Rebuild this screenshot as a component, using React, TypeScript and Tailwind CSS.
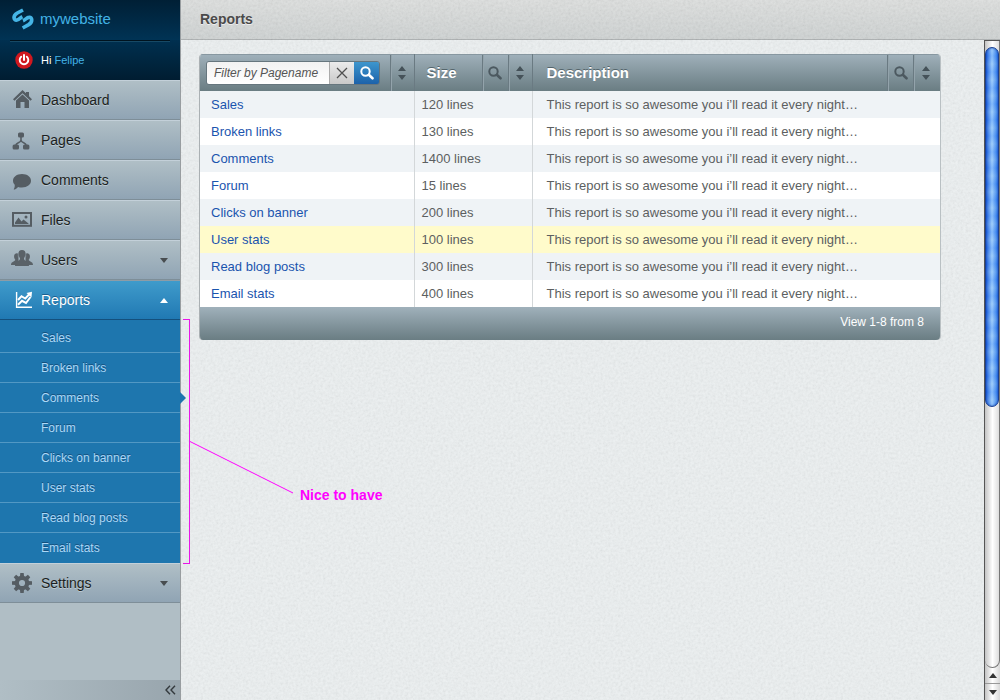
import { useState } from "react";
import type { ReactNode } from "react";

type Report = { name: string; size: string };

const REPORTS: Report[] = [
  { name: "Sales", size: "120 lines" },
  { name: "Broken links", size: "130 lines" },
  { name: "Comments", size: "1400 lines" },
  { name: "Forum", size: "15 lines" },
  { name: "Clicks on banner", size: "200 lines" },
  { name: "User stats", size: "100 lines" },
  { name: "Read blog posts", size: "300 lines" },
  { name: "Email stats", size: "400 lines" },
];

const DESCRIPTION = "This report is so awesome you i’ll read it every night…";

function LogoIcon() {
  return (
    <svg className="h-[22px] w-[22px]" viewBox="0 0 66 66" fill="none" stroke="#45b5e6" strokeWidth="11" aria-hidden="true">
      <path d="M33 6 L16 15 C2 23 4 38 15 36 C22 35 25 29 31 26" />
      <path d="M32 60 L50 50 C63 42 61 26 51 28 C44 29 41 35 33 38" />
    </svg>
  );
}

function PowerIcon() {
  return (
    <svg className="h-[18px] w-[18px]" viewBox="0 0 18 18" aria-hidden="true">
      <circle cx="9" cy="9" r="8.7" fill="#d0181f" />
      <path d="M6.2 5.7 A4.3 4.3 0 1 0 11.8 5.7" fill="none" stroke="#fff" strokeWidth="1.9" strokeLinecap="round" />
      <path d="M9 4v5" stroke="#fff" strokeWidth="2" strokeLinecap="round" />
    </svg>
  );
}

function HomeIcon() {
  return (
    <svg className="h-5 w-5" viewBox="0 0 20 20" fill="#555d63" aria-hidden="true">
      <path d="M10.5 0 L14 3.300 V2 H17 V6.200 L20 9.300 L18.500 10.800 L10.500 3.300 L2.500 10.800 L1 9.300Z" />
      <path d="M10.500 4.500 L17 10.600 V18 H12.500 V12 H8.500 V18 H4 V10.600Z" />
    </svg>
  );
}

function PagesIcon() {
  return (
    <svg className="h-5 w-5" viewBox="0 0 20 20" aria-hidden="true">
      <g fill="#555d63">
        <rect x="6" y="2.500" width="6" height="5" rx="1.5" />
        <rect x="0.6" y="14.500" width="6.4" height="5" rx="1.5" />
        <rect x="11" y="14.500" width="6.4" height="5" rx="1.5" />
      </g>
      <path d="M9 6.500 V10.500 M3.800 15.500 C4 12 8.500 13.500 9 10 C9.500 13.500 14 12 14.200 15.500" fill="none" stroke="#555d63" strokeWidth="1.600" />
    </svg>
  );
}

function CommentsIcon() {
  return (
    <svg className="h-5 w-5" viewBox="0 0 20 20" fill="#555d63" aria-hidden="true">
      <path d="M10 4 C15.200 4 19 6.900 19 10.800 C19 14.700 15.200 17.500 10 17.500 C8.500 17.500 7.200 17.300 6 16.900 C5 18.200 3.400 19.500 1.700 19.500 C2.500 18 2.900 16.600 2.700 14.800 C1.600 13.700 1 12.300 1 10.800 C1 6.900 4.800 4 10 4Z" />
    </svg>
  );
}

function FilesIcon() {
  return (
    <svg className="h-5 w-5" viewBox="0 0 20 20" aria-hidden="true">
      <rect x="1" y="3" width="18" height="12.800" fill="none" stroke="#555d63" strokeWidth="2" />
      <path d="M3 14 V12.500 L6.500 7.500 L9.500 11.500 L11.500 9.500 L16.500 13.500 V14Z" fill="#555d63" />
      <circle cx="14" cy="7" r="1.500" fill="#555d63" />
    </svg>
  );
}

function UsersIcon() {
  return (
    <svg className="h-5 w-[22px]" viewBox="0 0 22 20" fill="#5a6268" aria-hidden="true">
      <path d="M7.500 4 C6.300 2.500 3.300 3 3.100 6 C3 8 3.700 8.900 4.300 9.700 C4.500 11.700 0 11.300 0 15 H7.500Z" />
      <path d="M14.500 4 C15.700 2.500 18.700 3 18.900 6 C19 8 18.300 8.900 17.700 9.700 C17.500 11.700 22 11.300 22 15 H14.500Z" />
      <path d="M11 0 C14 0 14.900 2.100 14.500 4.600 C14.300 6.300 13.600 7.300 13 8.300 C12.800 11.500 18 10.800 18 16 H4 C4 10.800 9.200 11.500 9 8.300 C8.400 7.300 7.700 6.300 7.500 4.600 C7.100 2.100 8 0 11 0Z" />
      <path d="M7 4 C6.800 6.500 7.800 8 8 9.500 M15 4 C15.200 6.500 14.200 8 14 9.500" fill="none" stroke="#8a99a4" strokeWidth="0.400" />
    </svg>
  );
}

function ReportsIcon() {
  return (
    <svg className="h-5 w-[22px]" viewBox="0 0 22 20" fill="none" stroke="#fff" aria-hidden="true">
      <path d="M4.600 2 V17.300 H20" strokeWidth="1.400" />
      <path d="M6 10 L9.500 6.200 L13.300 8.500 L17.500 4" strokeWidth="2" />
      <path d="M6 14.800 L10 10.800 L14 13 L18.500 7" strokeWidth="2" />
      <path d="M14.500 3 L20 1.800 L19.500 7.500Z" fill="#fff" stroke="none" />
    </svg>
  );
}

function SettingsIcon() {
  const angles = [0, 45, 90, 135];
  return (
    <svg className="h-5 w-5" viewBox="0 0 20 20" aria-hidden="true">
      <circle cx="10" cy="10" r="5.200" fill="none" stroke="#555d63" strokeWidth="4.200" />
      {angles.map((a) => (
        <g key={a} transform={`rotate(${a} 10 10)`} fill="#555d63">
          <path d="M7.900 4 L8.300 0 H11.700 L12.100 4Z M7.900 16 L8.300 20 H11.700 L12.100 16Z" />
        </g>
      ))}
    </svg>
  );
}

function SearchIcon({ className, stroke }: { className: string; stroke: string }) {
  return (
    <svg className={className} viewBox="0 0 14 14" fill="none" stroke={stroke} aria-hidden="true">
      <circle cx="5.500" cy="5.500" r="4.200" strokeWidth="2" />
      <path d="M8.800 8.800 L12.500 12.300" strokeWidth="2.600" strokeLinecap="round" />
    </svg>
  );
}

function SortIcon() {
  return (
    <svg className="h-[14px] w-2" viewBox="0 0 8 14" aria-hidden="true">
      <path d="M4 0 L8 5 H0Z M4 14 L0 9 H8Z" fill="#455259" />
    </svg>
  );
}

function Triangle({ up, fill }: { up?: boolean; fill: string }) {
  return (
    <svg className="h-[5px] w-2" viewBox="0 0 8 5" fill={fill} aria-hidden="true">
      <path d={up ? "M4 0 L8 5 H0Z" : "M0 0 H8 L4 5Z"} />
    </svg>
  );
}

function NavItem({ icon, label, arrow }: { icon: ReactNode; label: string; arrow?: boolean }) {
  return (
    <li>
      <a
        href="#"
        className="flex h-10 items-center border-t border-b border-t-[#c3d0d9] border-b-[#7e8e98] bg-linear-to-b from-[#b0bfc6] to-[#90a4b4] pr-3 text-[14px] text-[#1c1f21] [text-shadow:0_1px_0_#bccad2]"
      >
        <span className="flex w-[41px] justify-center pl-[3px]">{icon}</span>
        <span className="flex-1">{label}</span>
        {arrow && <Triangle fill="#484d50" />}
      </a>
    </li>
  );
}

function Sidebar() {
  return (
    <aside className="relative z-10 flex w-[181px] shrink-0 flex-col border-r border-[#989da0] bg-[#b0bec5]">
      <div className="bg-linear-to-b from-[#001f35] to-[#003355]">
        <a href="#" className="flex h-10 items-center gap-[6px] pb-[2px] pl-3 text-[15px] text-[#43b3e6]">
          <LogoIcon />
          <span>mywebsite</span>
        </a>
      </div>
      <div className="h-10 bg-linear-to-b from-[#003050] to-[#001d31]">
        <div className="mx-[10px] border-t border-b border-t-[#00131f] border-b-[#174965]" />
        <div className="flex h-9 items-center gap-2 pl-[15px] text-[11px] text-white">
          <button type="button" aria-label="Log out">
            <PowerIcon />
          </button>
          <p>
            Hi{" "}
            <a href="#" className="text-[#43b3e6]">
              Felipe
            </a>
          </p>
        </div>
      </div>
      <nav>
        <ul>
          <NavItem icon={<HomeIcon />} label="Dashboard" />
          <NavItem icon={<PagesIcon />} label="Pages" />
          <NavItem icon={<CommentsIcon />} label="Comments" />
          <NavItem icon={<FilesIcon />} label="Files" />
          <NavItem icon={<UsersIcon />} label="Users" arrow />
          <li>
            <a
              href="#"
              className="flex h-10 items-center border-t border-b border-t-[#8d9ca6] border-b-[#14507d] bg-linear-to-b from-[#3f9bcb] to-[#2079b3] pr-3 text-[14px] text-white [text-shadow:0_-1px_0_#1c5f8d]"
            >
              <span className="flex w-[41px] justify-center pl-1">
                <ReportsIcon />
              </span>
              <span className="flex-1">Reports</span>
              <Triangle up fill="#fff" />
            </a>
            <div className="relative bg-[#1e76ae] pt-[3px]">
              <ul className="text-[12px] text-[#acd8f7] [text-shadow:0_-1px_0_#14507d]">
                {REPORTS.map((r) => (
                  <li key={r.name} className="relative border-b border-[#5298c4] last:border-[#1e76ae]">
                    <a href="#" className="flex h-[29px] items-center pt-[1px] pl-[41px]">
                      {r.name}
                    </a>
                    {r.name === "Comments" && (
                      <svg className="absolute top-[9px] -right-[6px] h-3 w-[6px]" viewBox="0 0 6 12" fill="#1e76ae" aria-hidden="true">
                        <path d="M0 0 L6 6 L0 12Z" />
                      </svg>
                    )}
                  </li>
                ))}
              </ul>
              <div className="pointer-events-none absolute -top-px -bottom-px left-[183px] w-[7px] border border-l-0 border-[#e815e8]" />
              <svg className="pointer-events-none absolute top-[121px] left-[190px] h-[53px] w-[104px]" viewBox="0 0 104 53" stroke="#ff00ff" aria-hidden="true">
                <path d="M0 .5 L103 52" />
              </svg>
              <strong className="absolute top-[165px] left-[300px] text-[14px] leading-5 whitespace-nowrap text-[#ff00ff]">
                Nice to have
              </strong>
            </div>
          </li>
          <NavItem icon={<SettingsIcon />} label="Settings" arrow />
        </ul>
      </nav>
      <button
        type="button"
        aria-label="Collapse sidebar"
        className="mt-auto flex h-5 items-center justify-end bg-linear-to-r from-[#b0bec5] to-[#98a5ad] pr-1"
      >
        <svg className="h-[10px] w-[11px]" viewBox="0 0 11 10" fill="none" stroke="#343a3e" strokeWidth="1.400" aria-hidden="true">
          <path d="M5 .8 L1 5 L5 9.200 M10 .8 L6 5 L10 9.200" />
        </svg>
      </button>
    </aside>
  );
}

function HeaderTools({ label, search }: { label: string; search?: boolean }) {
  return (
    <>
      {search && (
        <button type="button" aria-label={`Search ${label}`} className="flex w-[26px] items-center justify-center border-l border-[#6a7a82] shadow-[inset_1px_0_0_#93a3ab]">
          <SearchIcon className="h-[14px] w-[14px]" stroke="#4c5960" />
        </button>
      )}
      <button type="button" aria-label={`Sort by ${label}`} className="flex w-6 items-center justify-center border-l border-[#6a7a82] shadow-[inset_1px_0_0_#93a3ab]">
        <SortIcon />
      </button>
    </>
  );
}

function ReportsTable() {
  const [filter, setFilter] = useState("");
  const rows = REPORTS.filter((r) => r.name.toLowerCase().includes(filter.toLowerCase()));
  return (
    <section className="overflow-hidden rounded-[4px] border-l border-[#aab0b3] shadow-[1px_0_0_#b9c0c3]">
      <table className="w-full table-fixed border-collapse text-left text-[13px] text-[#5c5f61]">
        <colgroup>
          <col className="w-[214px]" />
          <col className="w-[118px]" />
          <col />
        </colgroup>
        <thead className="bg-linear-to-b from-[#a0b1bb] to-[#6a7d83] text-[15px] text-white">
          <tr>
            <th className="p-0" aria-label="Pagename">
              <div className="flex h-[37px] border-t border-[#8797a0]">
                <div className="flex flex-1 items-center pl-[6px]">
                  <div className="flex h-6 overflow-hidden rounded-[3px] border border-[#66767e]">
                    <input
                      type="text"
                      aria-label="Filter by Pagename"
                      placeholder="Filter by Pagename"
                      value={filter}
                      onChange={(e) => setFilter(e.target.value)}
                      className="w-[122px] bg-linear-to-b from-[#f2f2f2] to-white pl-[7px] text-[12px] font-normal text-[#555] italic outline-none placeholder:text-[#555]"
                    />
                    <button
                      type="button"
                      aria-label="Clear filter"
                      onClick={() => setFilter("")}
                      className="flex w-[25px] items-center justify-center border-l border-[#aaa] bg-linear-to-b from-[#ececec] to-[#c9c9c9]"
                    >
                      <svg className="h-3 w-3" viewBox="0 0 12 12" stroke="#505050" strokeWidth="1.300" aria-hidden="true">
                        <path d="M1 1 L11 11 M11 1 L1 11" />
                      </svg>
                    </button>
                    <button type="button" aria-label="Apply filter" className="flex w-[25px] items-center justify-center bg-linear-to-b from-[#3d96cd] to-[#1d62aa]">
                      <SearchIcon className="h-[14px] w-[14px]" stroke="#fff" />
                    </button>
                  </div>
                </div>
                <HeaderTools label="Pagename" />
              </div>
            </th>
            <th className="border-l border-[#6a7a82] p-0">
              <div className="flex h-[37px] border-t border-[#8797a0]">
                <span className="flex flex-1 items-center pl-3 [text-shadow:0_-1px_0_#55656c]">Size</span>
                <HeaderTools label="Size" search />
              </div>
            </th>
            <th className="border-l border-[#6a7a82] p-0">
              <div className="flex h-[37px] border-t border-[#8797a0] pr-[3px]">
                <span className="flex flex-1 items-center pl-[14px] [text-shadow:0_-1px_0_#55656c]">Description</span>
                <HeaderTools label="Description" search />
              </div>
            </th>
          </tr>
        </thead>
        <tbody>
          {rows.map((r) => (
            <tr key={r.name} className={r.name === "User stats" ? "h-[27px] bg-[#fffbcb]" : "h-[27px] odd:bg-[#eff3f6] even:bg-white"}>
              <td className="p-0 pl-[11px]">
                <a href="#" className="text-[#1a54ae]">
                  {r.name}
                </a>
              </td>
              <td className="border-l border-[#d3d7d9] p-0 pl-[7px]">{r.size}</td>
              <td className="border-l border-[#d3d7d9] p-0 pl-[14px]">{DESCRIPTION}</td>
            </tr>
          ))}
        </tbody>
      </table>
      <footer className="flex h-[33px] items-center justify-end bg-linear-to-b from-[#a0b1bb] to-[#6a7d83] pr-4 pb-1 text-[12px] text-white">
        View 1-8 from 8
      </footer>
    </section>
  );
}

function Grain() {
  return (
    <svg className="pointer-events-none absolute inset-0 h-full w-full opacity-10" aria-hidden="true">
      <filter id="grain">
        <feTurbulence type="fractalNoise" baseFrequency="0.4" numOctaves="3" />
        <feColorMatrix values="1 0 0 0 0  1 0 0 0 0  1 0 0 0 0  0 0 0 0 1" />
      </filter>
      <rect width="100%" height="100%" filter="url(#grain)" />
    </svg>
  );
}

function Scrollbar() {
  return (
    <div className="flex w-4 shrink-0 flex-col border-t border-l border-[#555] bg-linear-to-r from-[#c4c4c4] via-white to-[#d8d8d8]" aria-hidden="true">
      <div className="flex flex-1 flex-col rounded-b-[8px] border-r border-b border-[#777] pt-[6px]">
        <div className="h-[360px] rounded-full border border-[#193f91] bg-linear-to-r from-[#1a5cd6] via-[#9ccdfb] to-[#2a78e4] shadow-[inset_0_0_2px_#0c3ca8]">
          <div className="h-full rounded-full bg-[repeating-linear-gradient(to_bottom,#ffffff11_0px,#0050ff22_8px,#ffffff11_16px)]" />
        </div>
      </div>
      <div className="flex h-4 items-center justify-center border-b border-[#999]">
        <Triangle up fill="#333" />
      </div>
      <div className="flex h-4 items-center justify-center">
        <Triangle fill="#333" />
      </div>
    </div>
  );
}

export default function App() {
  return (
    <div className="flex min-h-screen font-['Liberation_Sans',Arial,sans-serif]">
      <Sidebar />
      <div className="relative flex min-w-0 flex-1 flex-col bg-[#edf1f2]">
        <header className="flex h-10 items-center border-b border-[#acb0b1] bg-linear-to-b from-[#dee0df] to-[#cfd3d3] pl-[19px]">
          <h1 className="relative z-10 text-[14px] font-bold text-[#4a4a4a] [text-shadow:0_1px_0_#eee]">Reports</h1>
        </header>
        <Grain />
        <div className="relative flex flex-1">
          <main className="min-w-0 flex-1 pt-[14px] pr-11 pl-[18px]">
            <ReportsTable />
          </main>
          <Scrollbar />
        </div>
      </div>
    </div>
  );
}
